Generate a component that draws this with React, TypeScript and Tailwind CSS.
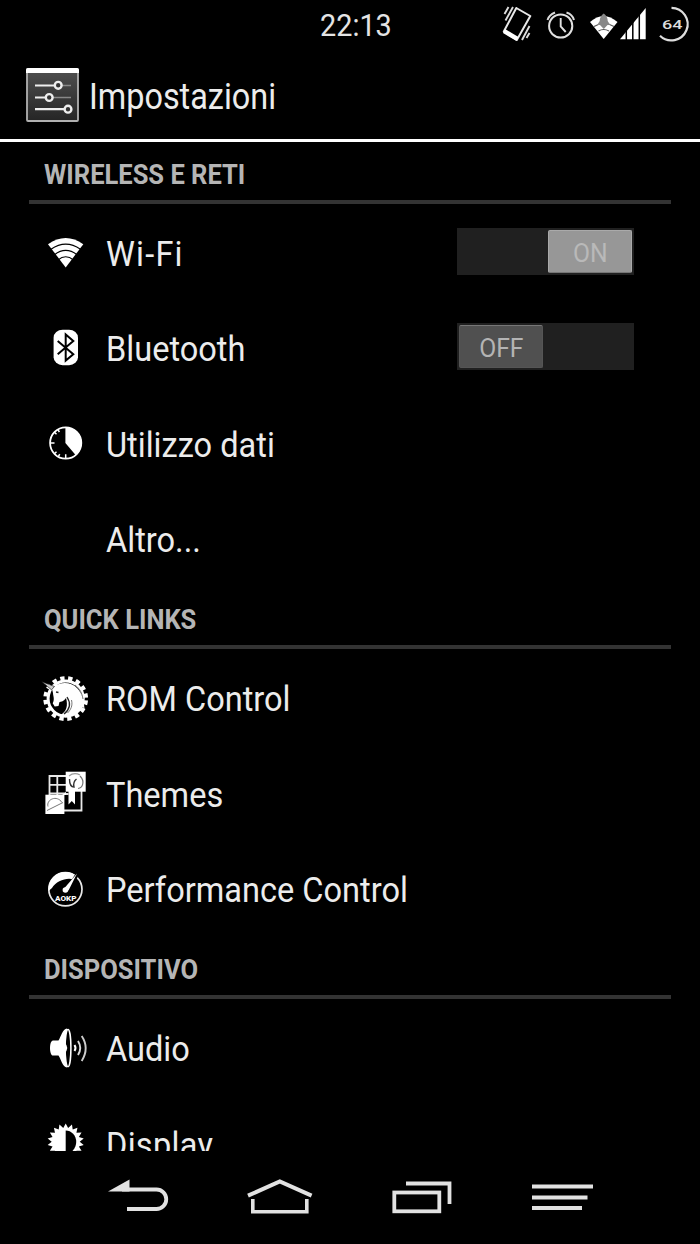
import type { ReactNode } from 'react';

interface RowProps {
  label: string;
  icon?: ReactNode;
  labelClass?: string;
  children?: ReactNode;
}

function Icon({ children }: { children: ReactNode }) {
  return (
    <svg width="48" height="48" viewBox="0 0 48 48" fill="none" className="overflow-visible">
      {children}
    </svg>
  );
}

function WifiIcon() {
  return (
    <Icon>
      <path d="M23.7 39.5 6 16.2Q23.7 3.8 41.3 16.2Z" fill="#fff" />
      <g stroke="#000" strokeWidth="1.1">
        <path d="M9 21.3Q23.7 11 38.5 21.3" />
        <path d="M12.5 26.7Q23.7 18 35 26.7" />
        <path d="M16 32Q23.7 25.5 31.5 32" />
      </g>
    </Icon>
  );
}

function BluetoothIcon() {
  return (
    <Icon>
      <rect x="11.6" y="6.7" width="24.4" height="35.5" rx="9" ry="8" fill="#fff" />
      <path d="M15.7 18 31.3 31.2 23.7 37.6V11.4L31.3 18 15.7 31.2" stroke="#000" strokeWidth="2" />
    </Icon>
  );
}

function DataIcon() {
  return (
    <Icon>
      <circle cx="23.7" cy="25" r="15.6" stroke="#fff" strokeWidth="1.8" />
      <path d="M23.4 25V9.2A15.8 15.8 0 0 1 33.8 37.3Z" fill="#fff" />
      <path d="M9 25h3.5M23.7 40.3v-4M12.5 14.3l2 2M12.5 35.8l2-2M16 11.8l1.4 2.2M16.5 38.3l1.2-2.2" stroke="#fff" strokeWidth="1.5" />
    </Icon>
  );
}

function RomIcon() {
  return (
    <Icon>
      <circle cx="23.7" cy="25.6" r="20.4" stroke="#fff" strokeWidth="4" strokeDasharray="4.3 3.71" strokeDashoffset="-1.9" />
      <circle cx="23.7" cy="25.6" r="17.6" stroke="#fff" strokeWidth="3" />
      <path
        d="M12 13.5C18 9 29 8.5 35 15c5 5 7 12 7.500 21l-3.500-4-1 5-5 4.500L22 44l-4-2c7-3 8-10 6-17-2 3-5 4-6.500 4l-1 4-3.800.5-2-3.200C13 26 11 23 11 20l-1-4Z"
        fill="#fff"
      />
      <path d="M-.5 8.500 12.500 13.500 9.500 16.800Z" fill="#ccc" stroke="#000" strokeWidth=".6" />
      <path d="M25 24c4.500 7 2 13-3 17" stroke="#222" strokeWidth="1.300" />
      <path d="M29.500 27c1.500 6-1 10-4 13M33 12c5 4 7 8 8 14" stroke="#666" strokeWidth=".9" />
      <path d="m14 19 2.500.5" stroke="#222" strokeWidth="1.300" />
    </Icon>
  );
}

function ThemesIcon() {
  return (
    <Icon>
      <path d="M7.500 27V8H24M15.300 8v19M7.500 16.800H24M7.500 25.500H24M22 42.500h17.500V23M22.500 26h4" stroke="#e8e8e8" strokeWidth="1.800" />
      <path d="M26.500 22h6.500v14.500l-3.200-3.600-3.300 3.600Z" fill="#fff" />
      <rect x="23.700" y="3.700" width="20" height="20" fill="#fff" />
      <path d="M38 8c5 5 3 12-2 12.500" stroke="#777" strokeWidth="1.200" />
      <path d="M27 8q5-4 11-1" stroke="#999" strokeWidth="1.200" />
      <path d="M27.500 11c0 5 1 8 4.500 8-1-4 0-6 2.500-8" stroke="#333" strokeWidth="1.400" />
      <rect x="3.400" y="26.700" width="19" height="19.300" fill="#fff" />
      <path d="M6 38.500c-2-7 9-12 14-4M5 42.500l16-8" stroke="#777" strokeWidth="1" />
      <path d="m20 27 4-3v3Z" fill="#fff" />
    </Icon>
  );
}

function PerformanceIcon() {
  return (
    <Icon>
      <circle cx="23.400" cy="25.300" r="16.600" stroke="#e8e8e8" strokeWidth="1.700" />
      <path d="M6.500 27C6 15 14 8 23.400 8c5 0 8.500 1.500 11.500 4.500l-3.500 3C25 13 14 17 10 24Z" fill="#fff" />
      <path d="M34.500 11.500 24.500 27.500" stroke="#000" strokeWidth="3.500" />
      <path d="m35 9.500-8.500 17-4-2.500Z" fill="#fff" />
      <circle cx="23.400" cy="26" r="2.800" fill="#fff" />
      <text x="13" y="37" fill="#fff" fontSize="7.500" fontWeight="800" textLength="21.500" lengthAdjust="spacingAndGlyphs">
        AOKP
      </text>
    </Icon>
  );
}

function AudioIcon() {
  return (
    <Icon>
      <path d="M11 17.500h5.500C19 14 20.500 6 25 5.600v39c-4.500-.4-6-8.600-8.500-12H11c-4 0-4-15.100 0-15.100Z" fill="#fff" />
      <ellipse cx="26" cy="25.100" rx="2.900" ry="18.600" fill="#000" stroke="#fff" strokeWidth="1.500" />
      <path d="M22 19q6.500 6 0 12Z" fill="#fff" />
      <path d="M32.500 22q2 3 0 6" stroke="#fff" strokeWidth="2" />
      <path d="M36 18q4.500 7 0 14" stroke="#ddd" strokeWidth="1.900" />
      <path d="M39.700 13q8 12 0 25" stroke="#ccc" strokeWidth="1.900" />
    </Icon>
  );
}

function DisplayIcon() {
  const points = Array.from({ length: 36 }, (_, i) => {
    const r = i % 2 === 0 ? 18.3 : 14;
    const a = (i * Math.PI) / 18 - Math.PI / 2;
    return `${23.7 + r * Math.cos(a)},${23.7 + r * Math.sin(a)}`;
  }).join(' ');

  return (
    <Icon>
      <polygon points={points} fill="#fff" />
      <path d="M23.700 12.500a10.500 11.500 0 0 1 0 23Z" fill="#000" />
    </Icon>
  );
}

function Toggle({ on }: { on?: boolean }) {
  return (
    <div className={`mr-[37px] flex h-[47px] w-[177px] bg-[#202020] px-[2px] pt-[2px] ${on ? 'justify-end' : 'justify-start'}`}>
      <div
        className={`flex h-[43px] w-[84px] items-center justify-center rounded-[2px] border text-[26px] ${
          on
            ? 'border-[#aaa] border-b-[#777] bg-[#979797] text-[#b9b9b9]'
            : 'border-[#555] border-t-[#777] bg-[#505050] text-[#b4b4b4]'
        }`}
      >
        <span className="scale-x-[.95] pt-[3px]">{on ? 'ON' : 'OFF'}</span>
      </div>
    </div>
  );
}

function Row({ label, icon, labelClass = '', children }: RowProps) {
  return (
    <div className="flex h-[95.33px] shrink-0 items-center pl-[13px]">
      <div className="w-[64px] shrink-0">{icon}</div>
      <span className={`origin-left scale-x-[.93] pt-[6px] text-[35px] leading-none whitespace-nowrap text-[#ececec] ${labelClass}`}>{label}</span>
      <div className="ml-auto">{children}</div>
    </div>
  );
}

function SectionTitle({ title }: { title: string }) {
  return (
    <div className="flex h-[64px] shrink-0 items-end border-b-[4px] border-[#333] pb-[9px] pl-[15px]">
      <span className="origin-left scale-x-[.945] text-[27px] leading-[32px] font-bold whitespace-nowrap text-[#b5b5b5]">{title}</span>
    </div>
  );
}

function StatusBar() {
  return (
    <div className="flex h-[49px] shrink-0 items-center">
      <span className="ml-[320px] w-[80px] origin-left scale-x-[.93] pt-[2px] text-[31px] leading-none text-[#e4e4e4]">22:13</span>
      <svg width="220" height="49" viewBox="480 0 220 49" fill="none" className="ml-[80px]">
        {/* vibrate */}
        <path d="m516.300 8 14 8-13.500 24-13-8.500Z" stroke="#e8e8e8" strokeWidth="2" strokeLinejoin="round" />
        <path d="m505 29 13.500 8-2 4-13.500-8Z" fill="#fff" />
        <path d="m513 7-7.500 13.500M508.500 7l-4 7M529.500 26 522 40M529.500 33l-3 5" stroke="#ddd" strokeWidth="1.900" />
        {/* alarm */}
        <circle cx="560.700" cy="26" r="11.600" stroke="#e0e0e0" strokeWidth="2" />
        <path d="M560.700 18v8.500l5 5.500" stroke="#e0e0e0" strokeWidth="1.900" />
        <path d="M547.500 20q1.500-5 7.500-7.500M566.500 12.500q6 2 7.500 7.500" stroke="#ddd" strokeWidth="2" />
        {/* wifi */}
        <path d="M603.700 39 590 22q13.500-12 27.500 0Z" fill="#fff" />
        <path d="M594 26.500q10-6 20 0M598.500 31q5-3 10.500 0" stroke="#555" strokeWidth="1.100" />
        <path d="M603.700 13.500q4 3 4 7.500l2.500 4h-13l2.500-4q0-4.500 4-7.500ZM600 25h7.500l-3.700 4Z" fill="#888" />
        {/* signal */}
        <path d="M620 39.300 645.700 8v31.300Z" fill="#fff" />
        <path d="M626.300 10v30M632.800 8v32M639.300 8v32" stroke="#000" strokeWidth="1.500" />
        {/* battery */}
        <path d="M671.500 7.800a16.300 16.300 0 1 1-11.500 28" stroke="#ddd" strokeWidth="2.200" />
        <text x="662" y="29.300" fill="#ddd" fontSize="13.500" fontWeight="500" textLength="20.500" lengthAdjust="spacingAndGlyphs">
          64
        </text>
      </svg>
    </div>
  );
}

function AppBar() {
  return (
    <div className="flex h-[93px] shrink-0 items-center border-b-[3px] border-white pl-[26px]">
      <svg width="53" height="54" viewBox="0 0 53 54" fill="none" className="mt-px">
        <defs>
          <linearGradient id="tile" x1="0" y1="0" x2="0" y2="1">
            <stop offset="0" stopColor="#505050" />
            <stop offset="1" stopColor="#252525" />
          </linearGradient>
        </defs>
        <rect x="1" y="1" width="51" height="52" rx="1" fill="url(#tile)" stroke="#b0b0b0" strokeWidth="1.800" />
        <path d="M0 5V2q0-2 2-2h49q2 0 2 2v3Z" fill="#fff" />
        <path d="M30 17.500h15M22 29.500h23" stroke="#888" strokeWidth="1.300" />
        <path d="M9 17.500h20M9 29.500h12M9 41.200h30" stroke="#eee" strokeWidth="2.200" />
        <g fill="#333" stroke="#eee" strokeWidth="2.400">
          <circle cx="32.200" cy="17.300" r="3.400" />
          <circle cx="23.200" cy="29.500" r="3.400" />
          <circle cx="42" cy="41.200" r="3.400" />
        </g>
      </svg>
      <h1 className="ml-[10px] origin-left scale-x-[.9] pt-[5px] text-[36px] leading-none text-[#ececec]">Impostazioni</h1>
    </div>
  );
}

function NavBar() {
  return (
    <div className="h-[93px] shrink-0 bg-black">
      <svg width="700" height="93" viewBox="0 1151 700 93" fill="none" stroke="#e2e2e2">
        <path d="M108 1191.500 129.500 1179.500v12Z" fill="#e2e2e2" stroke="none" />
        <path d="M122 1189.500h34.500a9.700 9.700 0 0 1 0 19.500H127" strokeWidth="3.800" />
        <path d="m248 1195.700 31.800-14.200 31.800 14.200" strokeWidth="4" />
        <path d="M252.800 1199v12.800h54V1199" strokeWidth="3.600" />
        <path d="M406 1183.500h43.500v20.500" strokeWidth="3.800" />
        <rect x="394.300" y="1192.500" width="45" height="18.800" strokeWidth="3.800" />
        <path d="M532 1186.500h61M532 1197.500h55.500M532 1208h50" strokeWidth="4" />
      </svg>
    </div>
  );
}

export default function App() {
  return (
    <div className="flex h-[1244px] w-[700px] flex-col overflow-hidden bg-black font-['Roboto',sans-serif]">
      <StatusBar />
      <AppBar />
      <main className="min-h-0 flex-1 overflow-hidden px-[29px]">
        <div className="-mt-[2px] flex flex-col">
          <SectionTitle title="WIRELESS E RETI" />
          <Row label="Wi-Fi" icon={<WifiIcon />} labelClass="tracking-[1.3px]">
            <Toggle on />
          </Row>
          <Row label="Bluetooth" icon={<BluetoothIcon />}>
            <Toggle />
          </Row>
          <Row label="Utilizzo dati" icon={<DataIcon />} />
          <Row label="Altro..." />
          <SectionTitle title="QUICK LINKS" />
          <Row label="ROM Control" icon={<RomIcon />} />
          <Row label="Themes" icon={<ThemesIcon />} />
          <Row label="Performance Control" icon={<PerformanceIcon />} />
          <SectionTitle title="DISPOSITIVO" />
          <Row label="Audio" icon={<AudioIcon />} />
          <Row label="Display" icon={<DisplayIcon />} labelClass="tracking-[0.3px]" />
        </div>
      </main>
      <NavBar />
    </div>
  );
}
